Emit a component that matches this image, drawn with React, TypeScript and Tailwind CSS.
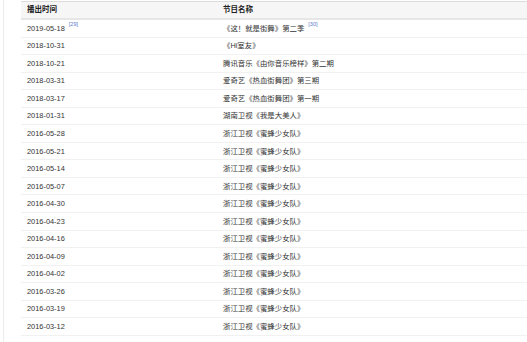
import React from 'react';

const rows: { date: string; dateRef?: string; name: string; nameRef?: string }[] = [
	{ date: '2019-05-18', dateRef: '[29]', name: '《这！就是街舞》第二季', nameRef: '[30]' },
	{ date: '2018-10-31', name: '《Hi室友》' },
	{ date: '2018-10-21', name: '腾讯音乐《由你音乐榜样》第二期' },
	{ date: '2018-03-31', name: '爱奇艺《热血街舞团》第三期' },
	{ date: '2018-03-17', name: '爱奇艺《热血街舞团》第一期' },
	{ date: '2018-01-31', name: '湖南卫视《我是大美人》' },
	{ date: '2016-05-28', name: '浙江卫视《蜜蜂少女队》' },
	{ date: '2016-05-21', name: '浙江卫视《蜜蜂少女队》' },
	{ date: '2016-05-14', name: '浙江卫视《蜜蜂少女队》' },
	{ date: '2016-05-07', name: '浙江卫视《蜜蜂少女队》' },
	{ date: '2016-04-30', name: '浙江卫视《蜜蜂少女队》' },
	{ date: '2016-04-23', name: '浙江卫视《蜜蜂少女队》' },
	{ date: '2016-04-16', name: '浙江卫视《蜜蜂少女队》' },
	{ date: '2016-04-09', name: '浙江卫视《蜜蜂少女队》' },
	{ date: '2016-04-02', name: '浙江卫视《蜜蜂少女队》' },
	{ date: '2016-03-26', name: '浙江卫视《蜜蜂少女队》' },
	{ date: '2016-03-19', name: '浙江卫视《蜜蜂少女队》' },
	{ date: '2016-03-12', name: '浙江卫视《蜜蜂少女队》' },
];

function Ref({ children }: { children: React.ReactNode }) {
	return <sup className="ml-[4px] text-[5.5px] text-[#5a78c8] align-[2px]">{children}</sup>;
}

export default function App() {
	return (
		<main
			className="h-[342px] w-[527px] overflow-hidden bg-white text-[#333] border-l border-[#ececec] ml-[3px]"
			style={{ fontFamily: '"Liberation Sans", "Noto Sans CJK SC", sans-serif' }}
		>
			<div className="ml-[17px] pt-px">
				<div className="flex h-[19px] items-center border-t border-[#dcdcdc] border-b-2 border-b-[#e6e6e6] bg-[#f6f6f6] text-[7.5px] font-bold text-[#222]">
					<div className="w-[202px] pl-[6px]">播出时间</div>
					<div>节目名称</div>
				</div>
				{rows.map((r, i) => (
					<div key={i} className="flex h-[17.55px] items-center border-b border-[#f1f1f1] text-[7.4px]">
						<div className="w-[202px] pl-[6px]">
							{r.date}
							{r.dateRef && <Ref>{r.dateRef}</Ref>}
						</div>
						<div>
							{r.name}
							{r.nameRef && <Ref>{r.nameRef}</Ref>}
						</div>
					</div>
				))}
			</div>
		</main>
	);
}
